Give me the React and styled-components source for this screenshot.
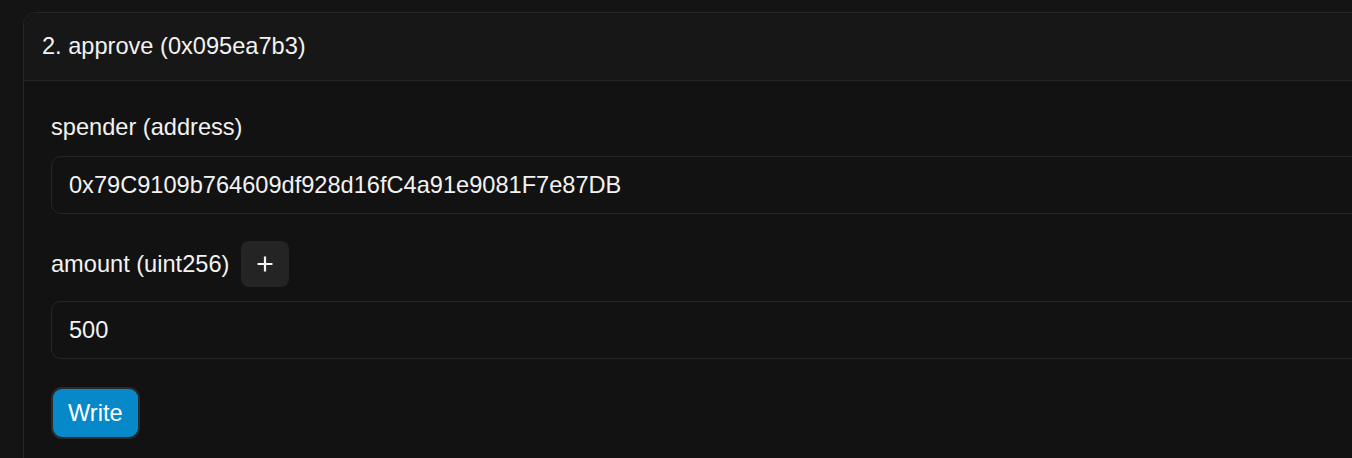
import React from 'react';
import styled, { createGlobalStyle } from 'styled-components';

const GlobalStyle = createGlobalStyle`
  html, body {
    margin: 0;
    padding: 0;
    background: #141414;
    overflow: hidden;
  }

  body {
    font-family: 'Liberation Sans', Arial, Helvetica, sans-serif;
    color: #f2f2f2;
  }
`;

const Page = styled.div`
  padding: 12px 0 0 23px;
  min-height: 458px;
  box-sizing: border-box;
`;

const Card = styled.section`
  width: 1380px;
  border: 1px solid #262626;
  border-radius: 12px;
  background: #121212;
  overflow: hidden;
`;

const CardHeader = styled.div`
  display: flex;
  align-items: center;
  height: 67px;
  padding: 0 18px;
  background: #171717;
  border-bottom: 1px solid #262626;
  font-size: 23.6px;
`;

const CardBody = styled.div`
  display: flex;
  flex-direction: column;
  gap: 27px;
  padding: 31px 27px 30px;
`;

const Field = styled.div`
  display: flex;
  flex-direction: column;
  gap: 14px;
`;

const LabelRow = styled.div`
  display: flex;
  align-items: center;
  gap: 12px;
  min-height: 30px;
`;

const Label = styled.label`
  font-size: 23.6px;
  line-height: 30px;
`;

const IconButton = styled.button`
  display: flex;
  align-items: center;
  justify-content: center;
  width: 48px;
  height: 46px;
  padding: 0;
  border: none;
  border-radius: 8px;
  background: #242424;
  color: #f5f5f5;
  cursor: pointer;
`;

const Input = styled.input`
  box-sizing: border-box;
  width: 100%;
  height: 58px;
  padding: 0 17px;
  border: 1px solid #272727;
  border-radius: 10px;
  background: #121212;
  color: #f2f2f2;
  font-family: inherit;
  font-size: 23.6px;
  outline: none;
`;

const WriteButton = styled.button`
  align-self: flex-start;
  height: 52px;
  margin-top: 1px;
  padding: 0 15px;
  border: 2px solid #2a2a2a;
  border-radius: 11px;
  background: #0788c8;
  color: #ffffff;
  font-family: inherit;
  font-size: 23.6px;
  cursor: pointer;
`;

const PlusIcon = () => (
  <svg width="18" height="18" viewBox="0 0 18 18" fill="none">
    <path d="M9 1.5v15M1.5 9h15" stroke="currentColor" strokeWidth="2.2" strokeLinecap="butt" />
  </svg>
);

const App = () => (
  <>
    <GlobalStyle />
    <Page>
      <Card>
        <CardHeader>2. approve (0x095ea7b3)</CardHeader>
        <CardBody>
          <Field>
            <LabelRow>
              <Label>spender (address)</Label>
            </LabelRow>
            <Input defaultValue="0x79C9109b764609df928d16fC4a91e9081F7e87DB" />
          </Field>
          <Field>
            <LabelRow>
              <Label>amount (uint256)</Label>
              <IconButton aria-label="add">
                <PlusIcon />
              </IconButton>
            </LabelRow>
            <Input defaultValue="500" />
          </Field>
          <WriteButton>Write</WriteButton>
        </CardBody>
      </Card>
    </Page>
  </>
);

export default App;
